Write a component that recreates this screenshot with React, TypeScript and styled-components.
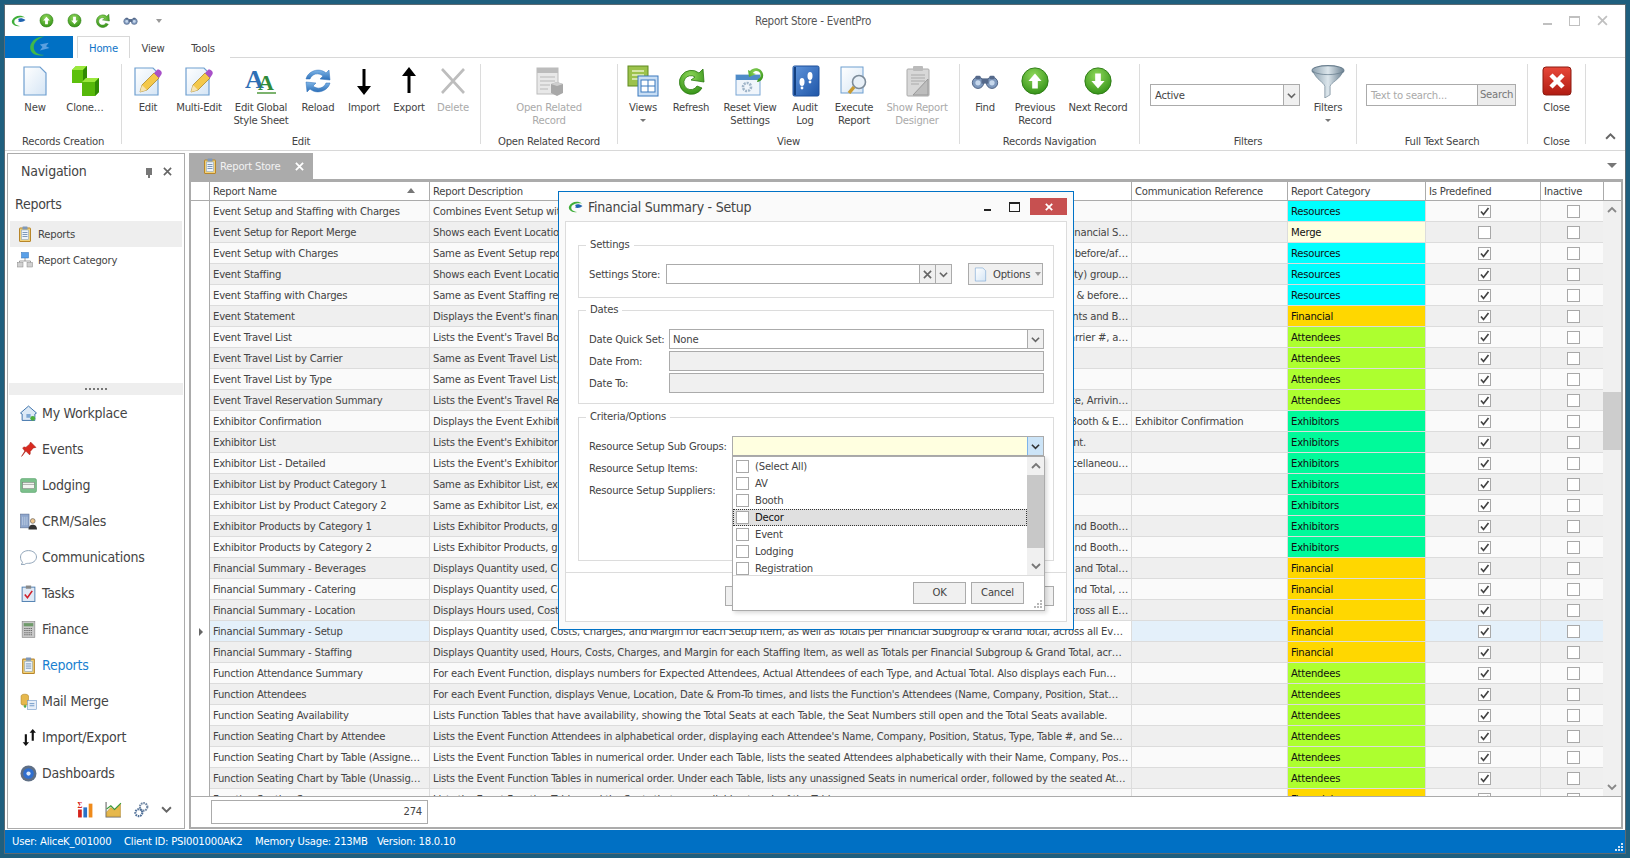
import React from "react";
import styled, { createGlobalStyle } from "styled-components";

const FONT = `"DejaVu Sans Condensed", "DejaVu Sans", "Liberation Sans", sans-serif`;

const GlobalStyle = createGlobalStyle`
  html, body { margin: 0; padding: 0; width: 1630px; height: 858px; overflow: hidden; background: #1f5f7e; }
  body { font-family: ${FONT}; font-stretch: condensed; font-size: 11.2px; letter-spacing: -0.22px; color: #444; }
  * { box-sizing: border-box; }
`;

/* ---------- icons ---------- */

interface IconProps {
  size?: number;
}

const Svg = ({ size = 32, children }: IconProps & { children: React.ReactNode }) => (
  <svg width={size} height={size} viewBox="0 0 32 32">
    {children}
  </svg>
);

const HiddenDefs = styled.svg`
  position: absolute;
  width: 0;
  height: 0;
`;

const Defs = () => (
  <HiddenDefs>
    <defs>
      <linearGradient id="page" x1="0" y1="0" x2="1" y2="1">
        <stop offset="0" stopColor="#ffffff" />
        <stop offset="1" stopColor="#d5e5f5" />
      </linearGradient>
      <radialGradient id="green" cx="0.45" cy="0.3" r="0.8">
        <stop offset="0" stopColor="#8fd85a" />
        <stop offset="1" stopColor="#2a8a10" />
      </radialGradient>
      <linearGradient id="blueArrow" x1="0" y1="0" x2="0" y2="1">
        <stop offset="0" stopColor="#7fb6e8" />
        <stop offset="1" stopColor="#2c6fb8" />
      </linearGradient>
      <linearGradient id="steel" x1="0" y1="0" x2="1" y2="0">
        <stop offset="0" stopColor="#8ea2b0" />
        <stop offset="0.5" stopColor="#dce6ec" />
        <stop offset="1" stopColor="#6f8494" />
      </linearGradient>
      <linearGradient id="red" x1="0" y1="0" x2="0" y2="1">
        <stop offset="0" stopColor="#e8483a" />
        <stop offset="1" stopColor="#b01c12" />
      </linearGradient>
      <linearGradient id="book" x1="0" y1="0" x2="1" y2="1">
        <stop offset="0" stopColor="#5f95dc" />
        <stop offset="1" stopColor="#1f56a8" />
      </linearGradient>
    </defs>
  </HiddenDefs>
);

const Logo = ({ size = 16 }: IconProps) => (
  <Svg size={size}>
    <path d="M28 9C20 3 6 5 2 15c-2 6 5 13 16 11-8-1-13-5-11-11 2-5 12-8 21-6z" fill="#3fae3a" />
    <path d="M14 12c4-2 9-2 15 2-4 4-10 5-15 3 2-1 2-3 0-5z" fill="#1f63b0" />
  </Svg>
);

const TabLogo = () => (
  <Svg size={28}>
    <path d="M22 4C12 4 5 11 6 18c1 6 8 9 16 7-7 0-12-3-12-9 0-5 5-10 12-12z" fill="#3fb84a" />
    <path d="M17 13l10-2-3 4 4 2-11 3 3-4z" fill="#5aa0e0" />
  </Svg>
);

const Ball = ({ size = 32, down }: IconProps & { down?: boolean }) => (
  <Svg size={size}>
    <circle cx="16" cy="16" r="14" fill="url(#green)" stroke="#2b7a12" />
    <path
      d={down ? "M13 8h6v8h4l-7 8-7-8h4z" : "M13 24h6v-8h4l-7-8-7 8h4z"}
      fill="#fff"
    />
  </Svg>
);

const GreenRefresh = ({ size = 32 }: IconProps) => (
  <Svg size={size}>
    <path d="M24 8a12 12 0 1 0 3 15l-5-2a7 7 0 1 1-2-9l-4 3 13 2-1-13z" fill="url(#green)" stroke="#2b7a12" strokeWidth="0.8" />
  </Svg>
);

const Binoculars = ({ size = 32 }: IconProps) => (
  <Svg size={size}>
    <circle cx="8" cy="18" r="6.5" fill="#7f99bd" stroke="#44587a" />
    <circle cx="24" cy="18" r="6.5" fill="#7f99bd" stroke="#44587a" />
    <circle cx="8" cy="18" r="3" fill="#c7d8ec" />
    <circle cx="24" cy="18" r="3" fill="#c7d8ec" />
    <rect x="12" y="13" width="8" height="6" fill="#55698a" />
    <rect x="5" y="10" width="6" height="4" rx="1.5" fill="#55698a" />
    <rect x="21" y="10" width="6" height="4" rx="1.5" fill="#55698a" />
  </Svg>
);

const PageShape = () => (
  <path d="M5 2h16l6 6v22H5z" fill="url(#page)" stroke="#6f9fd0" strokeWidth="1.2" />
);

const NewIcon = ({ size = 32 }: IconProps) => (
  <Svg size={size}>
    <PageShape />
  </Svg>
);

const CloneIcon = () => (
  <Svg>
    <path d="M3 5l4-4h11v13l-4 4H3z" fill="#5cc00c" />
    <path d="M3 5l4-4h11l-4 4z" fill="#9be83c" />
    <path d="M14 5l4-4v13l-4 4z" fill="#2f8a04" />
    <path d="M13 17l4-4h13v14l-4 4H13z" fill="#56b80a" />
    <path d="M13 17l4-4h13l-4 4z" fill="#9be83c" />
    <path d="M26 17l4-4v14l-4 4z" fill="#2f8a04" />
  </Svg>
);

const Pencil = () => (
  <g>
    <path d="M8 27l2-7L22 8l5 5-12 12z" fill="#f4c84a" stroke="#a57d1a" strokeWidth="0.7" />
    <path d="M8 27l2-7 5 5z" fill="#f6e3b0" />
    <path d="M22 8l3-3c1-1 3 0 4 1s1 3 0 4l-2 3z" fill="#a850c8" />
  </g>
);

const EditIcon = () => (
  <Svg>
    <path d="M3 3h18l5 5v22H3z" fill="url(#page)" stroke="#6f9fd0" strokeWidth="1.2" />
    <Pencil />
  </Svg>
);

const StyleIcon = () => (
  <Svg>
    <text x="0" y="23" fontFamily="Liberation Serif" fontWeight="bold" fontSize="26" fill="#2f6fb5">A</text>
    <text x="13" y="25" fontFamily="Liberation Serif" fontWeight="bold" fontSize="22" fill="#2f8a3a">A</text>
    <path d="M12 28h19" stroke="#5ca04a" strokeWidth="1.6" />
  </Svg>
);

const ReloadIcon = () => (
  <Svg>
    <path d="M4 14C6 6 17 2 24 8l3-3 1 10-10-1 3-3c-5-4-11-2-13 3z" fill="url(#blueArrow)" stroke="#2c6fb8" strokeWidth="0.5" />
    <path d="M28 18c-2 8-13 12-20 6l-3 3-1-10 10 1-3 3c5 4 11 2 13-3z" fill="url(#blueArrow)" stroke="#2c6fb8" strokeWidth="0.5" />
  </Svg>
);

const ArrowIcon = ({ size = 32, up }: IconProps & { up?: boolean }) => (
  <Svg size={size}>
    <path
      d={up ? "M14.5 28V11H9l7-9 7 9h-5.500v17z" : "M14.5 4v17H9l7 9 7-9h-5.500V4z"}
      fill="#000"
    />
  </Svg>
);

const DeleteIcon = () => (
  <Svg>
    <path d="M5 4l22 24M27 4L5 28" stroke="#bdbdbd" strokeWidth="2.6" />
  </Svg>
);

const RelatedIcon = () => (
  <Svg>
    <rect x="4" y="3" width="21" height="26" fill="#e8e8e8" stroke="#bcbcbc" />
    <rect x="4" y="3" width="21" height="5" fill="#bcbcbc" />
    <path d="M7 12h15M7 16h15M7 20h10M7 24h8" stroke="#b8b8b8" />
    <path d="M18 19l6-2 6 2v9l-6 3-6-3z" fill="#a8a8a8" />
    <path d="M18 19l6-2 6 2-6 2z" fill="#cfcfcf" />
  </Svg>
);

const ViewsIcon = () => (
  <Svg>
    <rect x="1" y="1" width="20" height="20" fill="#9cc24c" stroke="#5f8a1e" />
    <path d="M5 6h12M5 10h12M5 14h8" stroke="#e8f2c8" strokeWidth="1.4" />
    <rect x="11" y="11" width="20" height="20" fill="#c8def5" stroke="#3a78bd" />
    <rect x="14" y="15" width="14" height="12" fill="#fff" stroke="#3a78bd" />
    <path d="M14 21h14M21 15v12" stroke="#3a78bd" />
  </Svg>
);

const ResetViewIcon = () => (
  <Svg>
    <rect x="2" y="10" width="24" height="20" fill="#f0f5fb" stroke="#7aa6d4" />
    <rect x="2" y="10" width="24" height="5" fill="#4f8bc8" />
    <circle cx="13" cy="22" r="4" fill="none" stroke="#9fb4c8" strokeWidth="2.6" strokeDasharray="2 1" />
    <path d="M16 6c4-5 12-3 13 3 1 4-2 8-6 8l1-3c3-1 3-4 2-6-1-2-5-3-7 0l3 1-7 3-1-7z" fill="url(#green)" />
  </Svg>
);

const AuditIcon = () => (
  <Svg>
    <rect x="4" y="1" width="26" height="30" rx="1.5" fill="url(#book)" stroke="#1c4f9a" />
    <path d="M6 2v28" stroke="#123f80" strokeWidth="2" />
    <ellipse cx="13" cy="17" rx="2.500" ry="4" fill="#fff" />
    <circle cx="13" cy="23" r="1.400" fill="#fff" />
    <ellipse cx="21" cy="11" rx="2.500" ry="4" fill="#fff" />
    <circle cx="21" cy="17" r="1.400" fill="#fff" />
  </Svg>
);

const ExecuteIcon = () => (
  <Svg>
    <rect x="3" y="2" width="22" height="26" fill="url(#page)" stroke="#6f9fd0" />
    <circle cx="21" cy="17" r="6.500" fill="#e8f0f8" stroke="#7c8b99" strokeWidth="1.6" />
    <path d="M16 22l-5 6" stroke="#c89a30" strokeWidth="3.5" />
  </Svg>
);

const DesignerIcon = () => (
  <Svg>
    <rect x="6" y="4" width="22" height="27" rx="1" fill="#d8d8d8" stroke="#aaa" />
    <rect x="12" y="1" width="10" height="5" rx="1" fill="#bbb" />
    <path d="M10 10h14M10 13h14M10 16h14M10 19h8" stroke="#aaa" />
    <path d="M27 14v16H12z" fill="#bdbdbd" stroke="#999" />
  </Svg>
);

const FunnelIcon = () => (
  <Svg size={34}>
    <ellipse cx="16" cy="6" rx="15" ry="4.500" fill="url(#steel)" stroke="#6a7f8f" />
    <path d="M2 7c3 8 10 10 11 14v11l5-3v-8c1-4 9-6 12-14-5 4-23 4-28 0z" fill="url(#steel)" stroke="#6a7f8f" strokeWidth="0.6" />
  </Svg>
);

const CloseIcon = () => (
  <Svg>
    <rect x="2" y="2" width="28" height="28" rx="3" fill="url(#red)" stroke="#8c1a10" />
    <path d="M10 10l12 12M22 10L10 22" stroke="#fff" strokeWidth="4.500" />
  </Svg>
);

const ClipboardIcon = ({ size = 16 }: IconProps) => (
  <Svg size={size}>
    <rect x="5" y="4" width="22" height="27" rx="1" fill="#f2d27a" stroke="#b8862a" strokeWidth="2" />
    <rect x="9" y="8" width="14" height="19" fill="#eef4fb" stroke="#7a9cc0" />
    <rect x="11" y="1" width="10" height="6" rx="1" fill="#7f98b8" />
    <path d="M11 13h10M11 17h10M11 21h10" stroke="#5f82ab" strokeWidth="1.6" />
  </Svg>
);

const CategoryIcon = () => (
  <Svg size={16}>
    <rect x="9" y="1" width="14" height="11" fill="#5aa0e8" stroke="#2c6fb8" />
    <path d="M16 12v6M5 18h22M5 18v3M27 18v3" stroke="#888" strokeWidth="1.6" />
    <rect x="1" y="21" width="11" height="9" fill="#d0d0d0" stroke="#888" />
    <rect x="20" y="21" width="11" height="9" fill="#d0d0d0" stroke="#888" />
  </Svg>
);

const HouseIcon = () => (
  <Svg size={17}>
    <path d="M16 2L1 15l3 2v12h24V17l3-2z" fill="#dce9f6" stroke="#3a6fa8" strokeWidth="1.800" />
    <rect x="12" y="17" width="8" height="7" fill="#7fa8d4" />
    <circle cx="24" cy="25" r="4.500" fill="#4caf3a" />
  </Svg>
);

const PinIcon = () => (
  <Svg size={17}>
    <path d="M20 2l10 10-5 1-6 7c1 3 0 5-1 6L11 19l-8 10 6-10-4-6c2-2 4-2 6-1l7-6z" fill="#d92a20" stroke="#a0160e" />
  </Svg>
);

const BedIcon = () => (
  <Svg size={17}>
    <rect x="1" y="3" width="30" height="26" rx="3" fill="#7cc08c" stroke="#4e9a60" />
    <rect x="5" y="10" width="22" height="12" fill="#f2f6f0" stroke="#777" />
    <path d="M5 14h22" stroke="#777" />
  </Svg>
);

const CrmIcon = () => (
  <Svg size={17}>
    <rect x="1" y="2" width="16" height="26" fill="#8ea6cc" stroke="#56698c" />
    <path d="M5 7v16M9 7v16M13 7v16" stroke="#d8e2f0" />
    <circle cx="24" cy="15" r="4.500" fill="#f0c890" stroke="#444" />
    <path d="M16 31c0-7 4-9 8-9s8 2 8 9z" fill="#333" />
  </Svg>
);

const BubbleIcon = () => (
  <Svg size={17}>
    <path d="M16 3c8 0 15 5 15 12s-7 12-15 12c-3 0-5 0-7 2H2c3-2 3-4 2-5-2-2-3-5-3-9C1 8 8 3 16 3z" fill="#fff" stroke="#8aa0b5" strokeWidth="1.800" />
  </Svg>
);

const TasksIcon = () => (
  <Svg size={17}>
    <rect x="4" y="4" width="24" height="27" fill="#dfe9f5" stroke="#4f7fb0" strokeWidth="1.800" />
    <rect x="11" y="1" width="10" height="6" fill="#888" />
    <path d="M9 18l5 6 9-13" fill="none" stroke="#d0202a" strokeWidth="3" />
  </Svg>
);

const CalcIcon = () => (
  <Svg size={17}>
    <rect x="4" y="1" width="24" height="30" fill="#c8c8c8" stroke="#777" />
    <rect x="7" y="4" width="18" height="6" fill="#6f9a6a" />
    <path d="M8 14h16M8 18h16M8 22h16M8 26h16" stroke="#666" strokeWidth="2" strokeDasharray="2.500 1.500" />
  </Svg>
);

const MergeIcon = () => (
  <Svg size={17}>
    <path d="M2 6c0-5 14-5 14 0v14c0 4-14 4-14 0z" fill="#e6b84c" stroke="#a87c1c" />
    <rect x="14" y="14" width="17" height="17" fill="#e6eef8" stroke="#5f8cc0" />
    <path d="M18 20h9M18 24h9" stroke="#5f8cc0" strokeWidth="1.600" />
    <path d="M7 25h5M9.500 22v6" stroke="#3aa03a" strokeWidth="2" />
  </Svg>
);

const ImportExportIcon = () => (
  <Svg size={17}>
    <path d="M9 10v15H5l6 7 6-7h-4V10z" fill="#111" />
    <path d="M22 22V7h-4l6-7 6 7h-4v15z" fill="#111" />
  </Svg>
);

const DashIcon = () => (
  <Svg size={17}>
    <circle cx="16" cy="16" r="15" fill="#5f6f85" />
    <circle cx="16" cy="16" r="10" fill="#2f6fd0" />
    <circle cx="16" cy="16" r="4" fill="#dce8f8" />
  </Svg>
);

const SigmaIcon = () => (
  <Svg size={17}>
    <rect x="2" y="16" width="7" height="15" fill="#d6241c" />
    <rect x="12" y="12" width="7" height="19" fill="#2a72c8" />
    <rect x="22" y="5" width="7" height="26" fill="#ef8a1a" />
    <text x="1" y="13" fontFamily="Liberation Serif" fontWeight="bold" fontSize="14" fill="#d6241c">Σ</text>
  </Svg>
);

const ChartIcon = () => (
  <Svg size={17}>
    <path d="M2 2v28h28" fill="none" stroke="#666" strokeWidth="2" />
    <path d="M3 21l8-9 6 5 12-11v23H3z" fill="#e6b84c" stroke="#a87c1c" />
    <path d="M3 15l8-6 7 7 12-12" fill="none" stroke="#3a9a3a" strokeWidth="2" />
  </Svg>
);

const GearsIcon = () => (
  <Svg size={17}>
    <circle cx="20" cy="11" r="7" fill="none" stroke="#6f86a3" strokeWidth="4" strokeDasharray="3 1.500" />
    <circle cx="11" cy="22" r="6.500" fill="none" stroke="#4f6f98" strokeWidth="4" strokeDasharray="3 1.500" />
  </Svg>
);

const Chevron = ({ up, color = "#666", size = 9 }: { up?: boolean; color?: string; size?: number }) => (
  <svg width={size} height={size} viewBox="0 0 10 10">
    <path d={up ? "M1 7l4-4 4 4" : "M1 3l4 4 4-4"} fill="none" stroke={color} strokeWidth="1.800" />
  </svg>
);

const CrossGlyph = ({ color = "#666", size = 9, width = 1.8 }: { color?: string; size?: number; width?: number }) => (
  <svg width={size} height={size} viewBox="0 0 10 10">
    <path d="M1 1l8 8M9 1l-8 8" stroke={color} strokeWidth={width} />
  </svg>
);

const Tick = () => (
  <svg width="11" height="11" viewBox="0 0 11 11">
    <path d="M2 5.500l2.500 3L9.500 2" fill="none" stroke="#444" strokeWidth="1.700" />
  </svg>
);

/* ---------- window frame ---------- */

const Page = styled.div`
  position: relative;
  width: 1630px;
  height: 858px;
  padding: 4px 4px 4px 4px;
`;

const Window = styled.div`
  width: 1622px;
  height: 850px;
  background: #fff;
  border: 1px solid #5c6a72;
  display: flex;
  flex-direction: column;
  overflow: hidden;
`;

const TitleBar = styled.div`
  height: 31px;
  flex: none;
  display: flex;
  align-items: center;
  position: relative;
`;

const Qat = styled.div`
  display: flex;
  align-items: center;
  width: 180px;
`;

const QatSlot = styled.span<{ $w: number }>`
  width: ${(p) => p.$w}px;
  display: flex;
  justify-content: center;
`;

const WindowTitle = styled.div`
  position: absolute;
  left: 0;
  right: 4px;
  text-align: center;
  color: #555;
  font-size: 11.5px;
`;

const WindowButtons = styled.div`
  margin-left: auto;
  display: flex;
  align-items: center;
  gap: 17px;
  padding-right: 17px;
`;

const MinGlyph = styled.span<{ $c?: string; $w?: number }>`
  display: block;
  width: ${(p) => p.$w ?? 13}px;
  height: 2px;
  margin-top: 6px;
  background: ${(p) => p.$c ?? "#c0c0c0"};
`;

const MaxGlyph = styled.span<{ $c?: string }>`
  display: block;
  width: 11px;
  height: 10px;
  border: 1px solid ${(p) => p.$c ?? "#c0c0c0"};
  border-top-width: 2px;
`;

const TabRow = styled.div`
  height: 22px;
  flex: none;
  display: flex;
  border-bottom: 1px solid #d8d8d8;
`;

const AppTab = styled.div`
  width: 68px;
  height: 22px;
  background: #0070c4;
  display: flex;
  align-items: center;
  justify-content: center;
`;

const RibbonTab = styled.div<{ $active?: boolean; $w: number }>`
  width: ${(p) => p.$w}px;
  height: 22px;
  line-height: 23px;
  text-align: center;
  color: ${(p) => (p.$active ? "#0f74c8" : "#444")};
  background: #fff;
  border: 1px solid ${(p) => (p.$active ? "#d8d8d8" : "transparent")};
  border-bottom: 0;
`;

/* ---------- ribbon ---------- */

const Ribbon = styled.div`
  height: 93px;
  flex: none;
  display: flex;
  padding-top: 6px;
  position: relative;
  border-bottom: 1px solid #d8d8d8;
`;

const Group = styled.div<{ $w: number }>`
  width: ${(p) => p.$w}px;
  height: 80px;
  flex: none;
  border-right: 1px solid #dcdcdc;
  display: flex;
  flex-direction: column;
`;

const GroupBody = styled.div<{ $pad?: number }>`
  height: 70px;
  flex: none;
  display: flex;
  padding-left: ${(p) => p.$pad ?? 0}px;
`;

const GroupCaption = styled.div`
  height: 15px;
  line-height: 15px;
  text-align: center;
  white-space: nowrap;
  color: #444;
`;

const RibbonBtn = styled.div<{ $w: number; $off?: boolean }>`
  width: ${(p) => p.$w}px;
  flex: none;
  display: flex;
  flex-direction: column;
  align-items: center;
  color: ${(p) => (p.$off ? "#aaa" : "#444")};
`;

const BtnIcon = styled.div`
  height: 37px;
  padding-bottom: 4px;
  flex: none;
  display: flex;
  align-items: center;
  justify-content: center;
`;

const BtnLabel = styled.div`
  line-height: 13px;
  text-align: center;
  white-space: pre-line;
`;

const Caret = styled.span`
  width: 0;
  height: 0;
  margin-top: 5px;
  border: 3px solid transparent;
  border-top: 3px solid #777;
  border-bottom: 0;
`;

const ComboBox = styled.div<{ $w: number; $m: number }>`
  width: ${(p) => p.$w}px;
  height: 22px;
  flex: none;
  margin-top: 20px;
  margin-left: ${(p) => p.$m}px;
  border: 1px solid #ababab;
  display: flex;
  align-items: center;
  background: #fff;
`;

const ComboText = styled.div<{ $muted?: boolean }>`
  flex: 1;
  padding-left: 4px;
  white-space: nowrap;
  overflow: hidden;
  color: ${(p) => (p.$muted ? "#aaa" : "#444")};
`;

const ComboArrow = styled.div`
  width: 16px;
  height: 100%;
  flex: none;
  background: #f0f0f0;
  border-left: 1px solid #ababab;
  display: flex;
  align-items: center;
  justify-content: center;
`;

const SearchBtn = styled.div`
  width: 38px;
  height: 100%;
  flex: none;
  background: #ececec;
  border-left: 1px solid #ababab;
  color: #777;
  text-align: center;
  line-height: 20px;
`;

const Collapse = styled.div`
  position: absolute;
  left: 1600px;
  top: 73px;
`;

/* ---------- workspace ---------- */

const Workspace = styled.div`
  flex: 1;
  min-height: 0;
  display: flex;
  gap: 4px;
  padding: 2px 0 1px 2px;
`;

const NavPanel = styled.div`
  width: 178px;
  flex: none;
  border: 1px solid #ababab;
  display: flex;
  flex-direction: column;
`;

const NavHeader = styled.div`
  height: 34px;
  flex: none;
  padding: 0 12px 0 13px;
  display: flex;
  align-items: center;
  font-size: 14px;
  letter-spacing: -0.24px;
  color: #444;
`;

const NavHeaderIcons = styled.div`
  margin-left: auto;
  display: flex;
  align-items: center;
  gap: 11px;
`;

const PinGlyph = styled.span`
  display: block;
  width: 6px;
  height: 7px;
  background: #777;
  position: relative;
  &::after {
    content: "";
    position: absolute;
    left: 2px;
    top: 7px;
    width: 2px;
    height: 3px;
    background: #777;
  }
`;

const NavSection = styled.div`
  height: 33px;
  flex: none;
  padding-left: 7px;
  line-height: 32px;
  font-size: 14px;
  letter-spacing: -0.24px;
  color: #444;
`;

const NavSubItem = styled.div<{ $active?: boolean }>`
  height: 26px;
  margin: 0 2px;
  padding-left: 7px;
  flex: none;
  display: flex;
  align-items: center;
  gap: 5px;
  background: ${(p) => (p.$active ? "#eeeeee" : "transparent")};
`;

const NavSpacer = styled.div`
  flex: 1;
`;

const Splitter = styled.div`
  height: 12px;
  flex: none;
  margin: 0 1px;
  background: #eee;
  display: flex;
  align-items: center;
  justify-content: center;
  gap: 2px;
`;

const Dot = styled.span`
  width: 2px;
  height: 2px;
  background: #777;
`;

const NavItem = styled.div<{ $active?: boolean }>`
  height: 36px;
  flex: none;
  padding-left: 12px;
  display: flex;
  align-items: center;
  gap: 5px;
  font-size: 14px;
  letter-spacing: -0.24px;
  color: ${(p) => (p.$active ? "#1a7fd0" : "#444")};
`;

const NavIconBox = styled.span`
  width: 17px;
  height: 17px;
  display: flex;
  flex: none;
`;

const NavFooter = styled.div`
  height: 37px;
  flex: none;
  display: flex;
  align-items: center;
  justify-content: flex-end;
  gap: 11px;
  padding-right: 12px;
`;

const DocArea = styled.div`
  flex: 1;
  min-width: 0;
  display: flex;
  flex-direction: column;
`;

const DocTabs = styled.div`
  height: 26px;
  flex: none;
  display: flex;
  position: relative;
`;

const DocTab = styled.div`
  width: 124px;
  background: #ababab;
  color: #f2f2f2;
  display: flex;
  align-items: center;
  padding-left: 13px;
  gap: 2px;
`;

const DocTabClose = styled.span`
  margin-left: auto;
  margin-right: 9px;
  display: flex;
`;

const DocMenu = styled.span`
  position: absolute;
  right: 8px;
  top: 10px;
  width: 0;
  height: 0;
  border: 5px solid transparent;
  border-top: 5px solid #777;
  border-bottom: 0;
`;

const GridFrame = styled.div`
  flex: 1;
  min-height: 0;
  border: 2px solid #ababab;
  border-top-width: 3px;
  display: flex;
  flex-direction: column;
  margin-right: 2px;
`;

const COLS = "19px 220px 702px 156px 138px 115px 63px 18px";

const HeaderRow = styled.div`
  height: 19px;
  flex: none;
  display: grid;
  grid-template-columns: ${COLS};
  border-bottom: 1px solid #ababab;
`;

const HeaderCell = styled.div`
  border-right: 1px solid #ababab;
  padding-left: 3px;
  line-height: 19px;
  position: relative;
  white-space: nowrap;
  &:last-child {
    border-right: 0;
  }
`;

const SortMark = styled.span`
  position: absolute;
  right: 14px;
  top: 6px;
  width: 0;
  height: 0;
  border: 4px solid transparent;
  border-bottom: 5px solid #777;
  border-top: 0;
`;

const GridBody = styled.div`
  height: 595px;
  flex: none;
  overflow: hidden;
  position: relative;
`;

const Row = styled.div<{ $odd?: boolean; $current?: boolean }>`
  height: 21px;
  display: grid;
  grid-template-columns: 19px 220px 702px 156px 138px 115px 63px;
  --row: ${(p) => (p.$current ? "#e4f0fa" : p.$odd ? "#efefef" : "#fafafa")};
`;

const Indicator = styled.div`
  background: #fff;
  border-right: 1px solid #ababab;
  display: flex;
  align-items: center;
  justify-content: center;
`;

const RowMark = styled.span`
  width: 0;
  height: 0;
  margin-left: 1px;
  border: 4px solid transparent;
  border-left: 4px solid #666;
  border-right: 0;
`;

const Cell = styled.div<{ $bg?: string; $plain?: boolean }>`
  background: ${(p) => p.$bg ?? "var(--row)"};
  border-right: 1px solid #dcdcdc;
  border-bottom: 1px solid #dcdcdc;
  padding: 0 3px 0 3px;
  line-height: 21px;
  white-space: nowrap;
  overflow: hidden;
  color: ${(p) => (p.$plain ? "#111" : "#444")};
`;

const NameText = styled.div`
  overflow: hidden;
  text-overflow: ellipsis;
`;

const DescCell = styled(Cell)`
  display: flex;
  justify-content: space-between;
  gap: 8px;
`;

const DescLead = styled.span`
  flex: 1;
  min-width: 0;
  overflow: hidden;
  text-overflow: clip;
`;

const DescTail = styled.span<{ $inset?: number }>`
  flex: none;
  margin-right: ${(p) => p.$inset ?? 0}px;
`;

const CheckCell = styled(Cell)`
  display: flex;
  align-items: center;
  justify-content: center;
  padding-left: 5px;
`;

const CheckBox = styled.span`
  width: 13px;
  height: 13px;
  background: #fff;
  border: 1px solid #a8a8a8;
  display: flex;
  align-items: center;
  justify-content: center;
`;

const ScrollBar = styled.div`
  position: absolute;
  right: 0;
  top: 0;
  bottom: 0;
  width: 18px;
  background: #f0f0f0;
  display: flex;
  flex-direction: column;
  align-items: center;
`;

const ScrollBtn = styled.div<{ $end?: boolean }>`
  height: 18px;
  flex: none;
  display: flex;
  align-items: center;
  justify-content: center;
  margin-top: ${(p) => (p.$end ? "auto" : "0")};
`;

const ScrollThumb = styled.div`
  width: 100%;
  height: 58px;
  margin-top: 173px;
  background: #cdcdcd;
`;

const GridFooter = styled.div`
  flex: 1;
  border-top: 1px solid #ababab;
  padding: 3px 0 0 20px;
  background: #fff;
`;

const SumBox = styled.div`
  width: 217px;
  height: 24px;
  border: 1px solid #ababab;
  text-align: right;
  line-height: 22px;
  padding-right: 5px;
`;

const StatusBar = styled.div`
  height: 23px;
  flex: none;
  background: #0070c4;
  color: #fff;
  display: flex;
  align-items: center;
  padding-left: 7px;
  position: relative;
`;

const StatusItem = styled.span<{ $w: number }>`
  width: ${(p) => p.$w}px;
  flex: none;
  white-space: nowrap;
`;

const Grip = styled.svg`
  position: absolute;
  right: 1px;
  bottom: 1px;
`;

/* ---------- modal ---------- */

const Modal = styled.div`
  position: absolute;
  left: 558px;
  top: 191px;
  width: 516px;
  height: 439px;
  background: #fafafa;
  border: 1px solid #0072c6;
  display: flex;
  flex-direction: column;
  padding: 0 6px 7px;
`;

const ModalTitle = styled.div`
  height: 29px;
  flex: none;
  display: flex;
  align-items: center;
  gap: 4px;
  padding-left: 3px;
  font-size: 14px;
  letter-spacing: -0.24px;
  color: #444;
`;

const ModalControls = styled.div`
  margin-left: auto;
  display: flex;
  align-items: center;
  gap: 10px;
`;

const ModalMin = styled(MinGlyph)`
  margin-right: 8px;
`;

const ModalClose = styled.div`
  width: 37px;
  height: 17px;
  background: #c75050;
  display: flex;
  align-items: center;
  justify-content: center;
`;

const ModalInner = styled.div`
  flex: 1;
  min-height: 0;
  background: #fff;
  border: 1px solid #dcdcdc;
  display: flex;
  flex-direction: column;
  padding-top: 23px;
  position: relative;
`;

const SetupGroup = styled.div<{ $h: number; $gap?: number }>`
  height: ${(p) => p.$h}px;
  margin: ${(p) => p.$gap ?? 0}px 12px 0 12px;
  flex: none;
  border: 1px solid #dcdcdc;
  padding: 18px 9px 0 10px;
  position: relative;
  display: flex;
  flex-direction: column;
  gap: 2px;
`;

const Legend = styled.span`
  position: absolute;
  left: 7px;
  top: -8px;
  padding: 0 4px;
  background: #fff;
  line-height: 14px;
`;

const FormRow = styled.div`
  display: flex;
  align-items: center;
  height: 20px;
  flex: none;
`;

const FormLabel = styled.div<{ $w: number }>`
  width: ${(p) => p.$w}px;
  flex: none;
  white-space: nowrap;
`;

const Field = styled.div<{ $bg?: string; $grow?: boolean; $w?: number }>`
  ${(p) => (p.$grow ? "flex: 1;" : `width: ${p.$w}px; flex: none;`)}
  height: 20px;
  border: 1px solid #ababab;
  background: ${(p) => p.$bg ?? "#fff"};
  display: flex;
  align-items: center;
`;

const FieldText = styled.div`
  flex: 1;
  padding-left: 3px;
`;

const FieldBtn = styled.div<{ $hot?: boolean }>`
  width: 16px;
  height: 100%;
  flex: none;
  border-left: 1px solid ${(p) => (p.$hot ? "#7eb4ea" : "#ababab")};
  background: ${(p) => (p.$hot ? "#cce4f7" : "#f0f0f0")};
  display: flex;
  align-items: center;
  justify-content: center;
`;

const OptionsBtn = styled.div`
  width: 75px;
  height: 22px;
  margin-left: 16px;
  flex: none;
  background: #f0f0f0;
  border: 1px solid #ababab;
  display: flex;
  align-items: center;
  padding-left: 4px;
  gap: 5px;
`;

const SmallCaret = styled.span`
  width: 0;
  height: 0;
  border: 3.500px solid transparent;
  border-top: 4px solid #999;
  border-bottom: 0;
`;

const ModalFooter = styled.div`
  margin-top: auto;
  height: 49px;
  flex: none;
  border-top: 1px solid #dcdcdc;
  display: flex;
  justify-content: space-between;
  padding: 13px 12px 0 159px;
`;

const FooterBtn = styled.div`
  width: 84px;
  height: 20px;
  background: #f0f0f0;
  border: 1px solid #ababab;
  text-align: center;
  line-height: 18px;
`;

const Popup = styled.div`
  position: absolute;
  left: 173px;
  top: 264px;
  width: 313px;
  height: 155px;
  background: #fff;
  border: 1px solid #ababab;
  box-shadow: 2px 2px 4px rgba(0, 0, 0, 0.15);
  display: flex;
  flex-direction: column;
`;

const PopupList = styled.div`
  height: 119px;
  flex: none;
  display: flex;
  border-bottom: 1px solid #dcdcdc;
`;

const PopupItems = styled.div`
  flex: 1;
  overflow: hidden;
  padding-top: 1px;
`;

const PopupItem = styled.div<{ $focus?: boolean }>`
  height: 17px;
  display: flex;
  align-items: center;
  gap: 6px;
  padding-left: 3px;
  background: ${(p) => (p.$focus ? "#e0e0e0" : "transparent")};
  outline: ${(p) => (p.$focus ? "1px dotted #333" : "none")};
  outline-offset: -1px;
  color: ${(p) => (p.$focus ? "#111" : "#444")};
`;

const PopupScroll = styled.div`
  width: 17px;
  flex: none;
  background: #f0f0f0;
  display: flex;
  flex-direction: column;
`;

const PopupThumb = styled.div`
  height: 73px;
  background: #c8c8c8;
`;

const PopupActions = styled.div`
  flex: 1;
  display: flex;
  justify-content: flex-end;
  gap: 5px;
  padding: 6px 20px 0 0;
  position: relative;
`;

const PopupBtn = styled.div`
  width: 53px;
  height: 22px;
  background: #f0f0f0;
  border: 1px solid #ababab;
  text-align: center;
  line-height: 20px;
`;

/* ---------- data ---------- */

const CATEGORY: Record<string, string> = {
  Resources: "#00ffff",
  Merge: "#ffffe0",
  Financial: "#ffd700",
  Attendees: "#adff2f",
  Exhibitors: "#00fa9a",
};

type GridRow = [string, string, string, string];

const rows: GridRow[] = [
  ["Event Setup and Staffing with Charges", "Combines Event Setup with Staffing and Charges", "", "Resources"],
  ["Event Setup for Report Merge", "Shows each Event Location's Setup Items", "financial S…", "Merge"],
  ["Event Setup with Charges", "Same as Event Setup report, with charges", "before/af…", "Resources"],
  ["Event Staffing", "Shows each Event Location's Staffing Items", "(city) group…", "Resources"],
  ["Event Staffing with Charges", "Same as Event Staffing report, with charges", "& before…", "Resources"],
  ["Event Statement", "Displays the Event's financial statement", "ents and B…", "Financial"],
  ["Event Travel List", "Lists the Event's Travel Bookings", "Carrier #, a…", "Attendees"],
  ["Event Travel List by Carrier", "Same as Event Travel List, grouped by Carrier", "", "Attendees"],
  ["Event Travel List by Type", "Same as Event Travel List, grouped by Type", "", "Attendees"],
  ["Event Travel Reservation Summary", "Lists the Event's Travel Reservations", "Date, Arrivin…", "Attendees"],
  ["Exhibitor Confirmation", "Displays the Event Exhibitor's confirmation", "Booth & E…", "Exhibitors"],
  ["Exhibitor List", "Lists the Event's Exhibitors and contacts", "Event.", "Exhibitors"],
  ["Exhibitor List - Detailed", "Lists the Event's Exhibitors with details", "Miscellaneou…", "Exhibitors"],
  ["Exhibitor List by Product Category 1", "Same as Exhibitor List, except by Category", "", "Exhibitors"],
  ["Exhibitor List by Product Category 2", "Same as Exhibitor List, except by Category", "", "Exhibitors"],
  ["Exhibitor Products by Category 1", "Lists Exhibitor Products, grouped by Category", "and Booth…", "Exhibitors"],
  ["Exhibitor Products by Category 2", "Lists Exhibitor Products, grouped by Category", "and Booth…", "Exhibitors"],
  ["Financial Summary - Beverages", "Displays Quantity used, Costs and Charges", "and Total…", "Financial"],
  ["Financial Summary - Catering", "Displays Quantity used, Costs and Charges", "and Total, …", "Financial"],
  ["Financial Summary - Location", "Displays Hours used, Costs and Charges", "across all E…", "Financial"],
  ["Financial Summary - Setup", "Displays Quantity used, Costs, Charges, and Margin for each Setup Item, as well as Totals per Financial Subgroup & Grand Total, across all Ev…", "", "Financial"],
  ["Financial Summary - Staffing", "Displays Quantity used, Hours, Costs, Charges, and Margin for each Staffing Item, as well as Totals per Financial Subgroup & Grand Total, acr…", "", "Financial"],
  ["Function Attendance Summary", "For each Event Function, displays numbers for Expected Attendees, Actual Attendees of each Type, and Actual Total. Also displays each Fun…", "", "Attendees"],
  ["Function Attendees", "For each Event Function, displays Venue, Location, Date & From-To times, and lists the Function's Attendees (Name, Company, Position, Stat…", "", "Attendees"],
  ["Function Seating Availability", "Lists Function Tables that have availability, showing the Total Seats at each Table, the Seat Numbers still open and the Total Seats available.", "", "Attendees"],
  ["Function Seating Chart by Attendee", "Lists the Event Function Attendees in alphabetical order, displaying each Attendee's Name, Company, Position, Status, Type, Table #, and Se…", "", "Attendees"],
  ["Function Seating Chart by Table (Assigne…", "Lists the Event Function Tables in numerical order. Under each Table, lists the seated Attendees alphabetically with their Name, Company, Pos…", "", "Attendees"],
  ["Function Seating Chart by Table (Unassig…", "Lists the Event Function Tables in numerical order. Under each Table, lists any unassigned Seats in numerical order, followed by the seated At…", "", "Attendees"],
  ["Function Seating Summary", "Lists the Event Function Tables and the Seats that are available at each of the Tables", "", "Financial"],
];

const navItems: [string, React.ReactNode][] = [
  ["My Workplace", <HouseIcon />],
  ["Events", <PinIcon />],
  ["Lodging", <BedIcon />],
  ["CRM/Sales", <CrmIcon />],
  ["Communications", <BubbleIcon />],
  ["Tasks", <TasksIcon />],
  ["Finance", <CalcIcon />],
  ["Reports", <ClipboardIcon size={17} />],
  ["Mail Merge", <MergeIcon />],
  ["Import/Export", <ImportExportIcon />],
  ["Dashboards", <DashIcon />],
];

const popupItems = ["(Select All)", "AV", "Booth", "Decor", "Event", "Lodging", "Registration"];

function Btn(props: { w: number; label: string; icon: React.ReactNode; off?: boolean; caret?: boolean }) {
  return (
    <RibbonBtn $w={props.w} $off={props.off}>
      <BtnIcon>{props.icon}</BtnIcon>
      <BtnLabel>{props.label}</BtnLabel>
      {props.caret && <Caret />}
    </RibbonBtn>
  );
}

function RibbonBar() {
  return (
    <Ribbon>
      <Group $w={117}>
        <GroupBody>
          <Btn w={60} label="New" icon={<NewIcon />} />
          <Btn w={40} label="Clone…" icon={<CloneIcon />} />
        </GroupBody>
        <GroupCaption>Records Creation</GroupCaption>
      </Group>
      <Group $w={359}>
        <GroupBody>
          <Btn w={52} label="Edit" icon={<EditIcon />} />
          <Btn w={50} label="Multi-Edit" icon={<EditIcon />} />
          <Btn w={74} label={"Edit Global\nStyle Sheet"} icon={<StyleIcon />} />
          <Btn w={40} label="Reload" icon={<ReloadIcon />} />
          <Btn w={52} label="Import" icon={<ArrowIcon />} />
          <Btn w={38} label="Export" icon={<ArrowIcon up />} />
          <Btn w={50} label="Delete" off icon={<DeleteIcon />} />
        </GroupBody>
        <GroupCaption>Edit</GroupCaption>
      </Group>
      <Group $w={137}>
        <GroupBody>
          <Btn w={136} label={"Open Related\nRecord"} off icon={<RelatedIcon />} />
        </GroupBody>
        <GroupCaption>Open Related Record</GroupCaption>
      </Group>
      <Group $w={342}>
        <GroupBody>
          <Btn w={50} label="Views" caret icon={<ViewsIcon />} />
          <Btn w={46} label="Refresh" icon={<GreenRefresh />} />
          <Btn w={72} label={"Reset View\nSettings"} icon={<ResetViewIcon />} />
          <Btn w={38} label={"Audit\nLog"} icon={<AuditIcon />} />
          <Btn w={60} label={"Execute\nReport"} icon={<ExecuteIcon />} />
          <Btn w={66} label={"Show Report\nDesigner"} off icon={<DesignerIcon />} />
        </GroupBody>
        <GroupCaption>View</GroupCaption>
      </Group>
      <Group $w={180}>
        <GroupBody>
          <Btn w={50} label="Find" icon={<Binoculars size={28} />} />
          <Btn w={50} label={"Previous\nRecord"} icon={<Ball size={30} />} />
          <Btn w={76} label="Next Record" icon={<Ball size={30} down />} />
        </GroupBody>
        <GroupCaption>Records Navigation</GroupCaption>
      </Group>
      <Group $w={217}>
        <GroupBody>
          <ComboBox $w={150} $m={10}>
            <ComboText>Active</ComboText>
            <ComboArrow>
              <Chevron />
            </ComboArrow>
          </ComboBox>
          <Btn w={56} label="Filters" caret icon={<FunnelIcon />} />
        </GroupBody>
        <GroupCaption>Filters</GroupCaption>
      </Group>
      <Group $w={171}>
        <GroupBody>
          <ComboBox $w={150} $m={9}>
            <ComboText $muted>Text to search...</ComboText>
            <SearchBtn>Search</SearchBtn>
          </ComboBox>
        </GroupBody>
        <GroupCaption>Full Text Search</GroupCaption>
      </Group>
      <Group $w={58}>
        <GroupBody>
          <Btn w={57} label="Close" icon={<CloseIcon />} />
        </GroupBody>
        <GroupCaption>Close</GroupCaption>
      </Group>
      <Collapse>
        <Chevron up size={11} />
      </Collapse>
    </Ribbon>
  );
}

function Navigation() {
  return (
    <NavPanel>
      <NavHeader>
        Navigation
        <NavHeaderIcons>
          <PinGlyph />
          <CrossGlyph size={9} color="#666" />
        </NavHeaderIcons>
      </NavHeader>
      <NavSection>Reports</NavSection>
      <NavSubItem $active>
        <ClipboardIcon />
        Reports
      </NavSubItem>
      <NavSubItem>
        <CategoryIcon />
        Report Category
      </NavSubItem>
      <NavSpacer />
      <Splitter>
        {[0, 1, 2, 3, 4, 5].map((i) => (
          <Dot key={i} />
        ))}
      </Splitter>
      {navItems.map(([label, icon]) => (
        <NavItem key={label} $active={label === "Reports"}>
          <NavIconBox>{icon}</NavIconBox>
          {label}
        </NavItem>
      ))}
      <NavFooter>
        <SigmaIcon />
        <ChartIcon />
        <GearsIcon />
        <Chevron size={11} />
      </NavFooter>
    </NavPanel>
  );
}

function ReportGrid() {
  return (
    <GridFrame>
      <HeaderRow>
        <HeaderCell />
        <HeaderCell>
          Report Name
          <SortMark />
        </HeaderCell>
        <HeaderCell>Report Description</HeaderCell>
        <HeaderCell>Communication Reference</HeaderCell>
        <HeaderCell>Report Category</HeaderCell>
        <HeaderCell>Is Predefined</HeaderCell>
        <HeaderCell>Inactive</HeaderCell>
        <HeaderCell />
      </HeaderRow>
      <GridBody>
        {rows.map(([name, desc, tail, category], i) => {
          const current = name === "Financial Summary - Setup";
          return (
            <Row key={name} $odd={i % 2 === 1} $current={current}>
              <Indicator>{current && <RowMark />}</Indicator>
              <Cell>
                <NameText>{name}</NameText>
              </Cell>
              <DescCell $bg={current ? "#ffffff" : undefined}>
                <DescLead>{desc}</DescLead>
                {tail && <DescTail $inset={tail === "Event." ? 42 : 0}>{tail}</DescTail>}
              </DescCell>
              <Cell>{name === "Exhibitor Confirmation" ? "Exhibitor Confirmation" : ""}</Cell>
              <Cell $bg={CATEGORY[category]} $plain>
                {category}
              </Cell>
              <CheckCell>
                <CheckBox>{i !== 1 && <Tick />}</CheckBox>
              </CheckCell>
              <CheckCell>
                <CheckBox />
              </CheckCell>
            </Row>
          );
        })}
        <ScrollBar>
          <ScrollBtn>
            <Chevron up size={10} color="#888" />
          </ScrollBtn>
          <ScrollThumb />
          <ScrollBtn $end>
            <Chevron size={10} color="#888" />
          </ScrollBtn>
        </ScrollBar>
      </GridBody>
      <GridFooter>
        <SumBox>274</SumBox>
      </GridFooter>
    </GridFrame>
  );
}

function SetupDialog() {
  return (
    <Modal>
      <ModalTitle>
        <Logo />
        Financial Summary - Setup
        <ModalControls>
          <ModalMin $c="#222" $w={7} />
          <MaxGlyph $c="#222" />
          <ModalClose>
            <CrossGlyph color="#fff" size={8} width={2.2} />
          </ModalClose>
        </ModalControls>
      </ModalTitle>
      <ModalInner>
        <SetupGroup $h={53}>
          <Legend>Settings</Legend>
          <FormRow>
            <FormLabel $w={77}>Settings Store:</FormLabel>
            <Field $w={286}>
              <FieldText />
              <FieldBtn>
                <CrossGlyph size={9} />
              </FieldBtn>
              <FieldBtn>
                <Chevron />
              </FieldBtn>
            </Field>
            <OptionsBtn>
              <NewIcon size={15} />
              Options
              <SmallCaret />
            </OptionsBtn>
          </FormRow>
        </SetupGroup>
        <SetupGroup $h={94} $gap={12}>
          <Legend>Dates</Legend>
          <FormRow>
            <FormLabel $w={80}>Date Quick Set:</FormLabel>
            <Field $grow>
              <FieldText>None</FieldText>
              <FieldBtn>
                <Chevron />
              </FieldBtn>
            </Field>
          </FormRow>
          <FormRow>
            <FormLabel $w={80}>Date From:</FormLabel>
            <Field $grow $bg="#f0f0f0" />
          </FormRow>
          <FormRow>
            <FormLabel $w={80}>Date To:</FormLabel>
            <Field $grow $bg="#f0f0f0" />
          </FormRow>
        </SetupGroup>
        <SetupGroup $h={144} $gap={13}>
          <Legend>Criteria/Options</Legend>
          <FormRow>
            <FormLabel $w={143}>Resource Setup Sub Groups:</FormLabel>
            <Field $grow $bg="#ffffe0">
              <FieldText />
              <FieldBtn $hot>
                <Chevron color="#333" />
              </FieldBtn>
            </Field>
          </FormRow>
          <FormRow>
            <FormLabel $w={143}>Resource Setup Items:</FormLabel>
          </FormRow>
          <FormRow>
            <FormLabel $w={143}>Resource Setup Suppliers:</FormLabel>
          </FormRow>
        </SetupGroup>
        <ModalFooter>
          <FooterBtn>Preview</FooterBtn>
          <FooterBtn>Close</FooterBtn>
        </ModalFooter>
      </ModalInner>
      <Popup>
        <PopupList>
          <PopupItems>
            {popupItems.map((item) => (
              <PopupItem key={item} $focus={item === "Decor"}>
                <CheckBox />
                {item}
              </PopupItem>
            ))}
          </PopupItems>
          <PopupScroll>
            <ScrollBtn>
              <Chevron up size={10} color="#777" />
            </ScrollBtn>
            <PopupThumb />
            <ScrollBtn $end>
              <Chevron size={10} color="#777" />
            </ScrollBtn>
          </PopupScroll>
        </PopupList>
        <PopupActions>
          <PopupBtn>OK</PopupBtn>
          <PopupBtn>Cancel</PopupBtn>
          <Grip width="10" height="10" viewBox="0 0 10 10">
            <path d="M7 1h2v2H7zM4 4h2v2H4zM7 4h2v2H7zM1 7h2v2H1zM4 7h2v2H4zM7 7h2v2H7z" fill="#b8b8b8" />
          </Grip>
        </PopupActions>
      </Popup>
    </Modal>
  );
}

export default function App() {
  return (
    <Page>
      <GlobalStyle />
      <Defs />
      <Window>
        <TitleBar>
          <Qat>
            <QatSlot $w={27}>
              <Logo />
            </QatSlot>
            <QatSlot $w={28}>
              <Ball size={15} />
            </QatSlot>
            <QatSlot $w={28}>
              <Ball size={15} down />
            </QatSlot>
            <QatSlot $w={28}>
              <GreenRefresh size={17} />
            </QatSlot>
            <QatSlot $w={28}>
              <Binoculars size={15} />
            </QatSlot>
            <QatSlot $w={30}>
              <SmallCaret />
            </QatSlot>
          </Qat>
          <WindowTitle>Report Store - EventPro</WindowTitle>
          <WindowButtons>
            <MinGlyph $w={9} />
            <MaxGlyph />
            <CrossGlyph color="#c0c0c0" size={11} width={1.6} />
          </WindowButtons>
        </TitleBar>
        <TabRow>
          <AppTab>
            <TabLogo />
          </AppTab>
          <RibbonTab $w={4} />
          <RibbonTab $w={53} $active>
            Home
          </RibbonTab>
          <RibbonTab $w={46}>View</RibbonTab>
          <RibbonTab $w={54}>Tools</RibbonTab>
        </TabRow>
        <RibbonBar />
        <Workspace>
          <Navigation />
          <DocArea>
            <DocTabs>
              <DocTab>
                <ClipboardIcon />
                Report Store
                <DocTabClose>
                  <CrossGlyph color="#fff" size={9} width={2} />
                </DocTabClose>
              </DocTab>
              <DocMenu />
            </DocTabs>
            <ReportGrid />
          </DocArea>
        </Workspace>
        <StatusBar>
          <StatusItem $w={112}>User: AliceK_001000</StatusItem>
          <StatusItem $w={131}>Client ID: PSI001000AK2</StatusItem>
          <StatusItem $w={122}>Memory Usage: 213MB</StatusItem>
          <StatusItem $w={100}>Version: 18.0.10</StatusItem>
          <Grip width="10" height="10" viewBox="0 0 10 10">
            <path d="M7 1h2v2H7zM4 4h2v2H4zM7 4h2v2H7zM1 7h2v2H1zM4 7h2v2H4zM7 7h2v2H7z" fill="#cfe2f3" />
          </Grip>
        </StatusBar>
      </Window>
      <SetupDialog />
    </Page>
  );
}
